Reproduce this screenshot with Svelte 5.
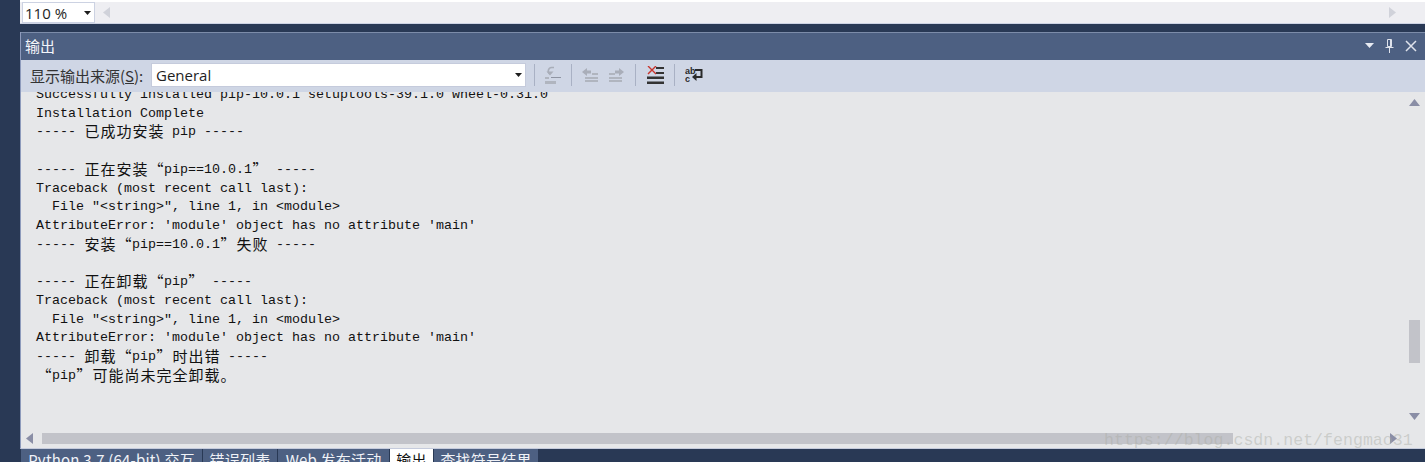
<script>
  const cjk = (s) => ({ c: s });
  const lines = [
    ['Successfully installed pip-10.0.1 setuptools-39.1.0 wheel-0.31.0'],
    ['Installation Complete'],
    ['----- ', cjk('已成功安装'), ' pip -----'],
    [],
    ['----- ', cjk('正在安装“'), 'pip==10.0.1', cjk('”'), ' -----'],
    ['Traceback (most recent call last):'],
    ['  File "<string>", line 1, in <module>'],
    ["AttributeError: 'module' object has no attribute 'main'"],
    ['----- ', cjk('安装“'), 'pip==10.0.1', cjk('”失败'), ' -----'],
    [],
    ['----- ', cjk('正在卸载“'), 'pip', cjk('”'), ' -----'],
    ['Traceback (most recent call last):'],
    ['  File "<string>", line 1, in <module>'],
    ["AttributeError: 'module' object has no attribute 'main'"],
    ['----- ', cjk('卸载“'), 'pip', cjk('”时出错'), ' -----'],
    [cjk('“'), 'pip', cjk('”可能尚未完全卸载。')]
  ];
  const tabs = [
    { name: 'Python 3.7 (64-bit) 交互', width: 181 },
    { name: '错误列表', width: 74 },
    { name: 'Web 发布活动', width: 111 },
    { name: '输出', width: 43 },
    { name: '查找符号结果', width: 104 }
  ];
</script>

<div class="page">
  <div class="topbar">
    <div class="zoom-row">
      <div class="zoom-box">
        <span>110 %</span>
        <svg width="7" height="4" viewBox="0 0 7 4"><path d="M0 0h7L3.500 4z" fill="#1e1e1e" /></svg>
      </div>
      <svg class="arrow-l" width="7" height="11" viewBox="0 0 7 11"><path d="M7 0v11L0 5.500z" fill="#d0d2da" /></svg>
      <span class="spacer"></span>
      <svg class="arrow-r" width="7" height="11" viewBox="0 0 7 11"><path d="M0 0v11l7-5.500z" fill="#d0d2da" /></svg>
    </div>
  </div>

  <div class="panel">
    <div class="title">
      <span class="title-text">输出</span>
      <span class="spacer"></span>
      <svg width="9" height="5" viewBox="0 0 9 5"><path d="M0 0h9L4.500 5z" fill="#e8ebf2" /></svg>
      <svg class="pin" width="9" height="14" viewBox="0 0 9 14"><path d="M2.500 .5h4v7h-4zM.5 8.500h8M4.500 9v5M5.500 1v6" fill="none" stroke="#dfe3ec" /></svg>
      <svg class="close" width="12" height="12" viewBox="0 0 12 12"><path d="M1 1l10 10M11 1L1 11" stroke="#dfe3ec" stroke-width="1.500" /></svg>
    </div>

    <div class="toolbar">
      <span class="label">显示输出来源(<u>S</u>):</span>
      <div class="combo">
        <span>General</span>
        <svg width="7" height="4" viewBox="0 0 7 4"><path d="M0 0h7L3.500 4z" fill="#1e1e1e" /></svg>
      </div>
      <div class="tools">
        <i class="sep"></i>
        <svg width="16" height="18" viewBox="0 0 16 18">
          <path d="M9 1.500H6.500a3.500 3.500 0 0 0-1.500 6.500" fill="none" stroke="#a9aeb9" stroke-width="1.600" />
          <path d="M1.500 5.500l3.500 4 3.500-4z" fill="#a9aeb9" />
          <path d="M6 11h10v1H6z" fill="#8e94a2" />
          <path d="M0 11h4v2H0zM0 15h11v3H0z" fill="#b0b5bf" />
        </svg>
        <i class="sep"></i>
        <svg width="16" height="14" viewBox="0 0 16 14">
          <path d="M5 0L0 4l5 4V5.500h4v-3H5z" fill="#a9aeb9" />
          <path d="M3 9h13v2H3zM3 12h13v2H3zM10 5h6v2h-6z" fill="#b0b5bf" />
        </svg>
        <svg width="17" height="14" viewBox="0 0 17 14">
          <path d="M11 0l5 4-5 4V5.500H7v-3h4z" fill="#a9aeb9" />
          <path d="M1 9h13v2H1zM1 12h13v2H1zM1 5h6v2H1z" fill="#b0b5bf" />
        </svg>
        <i class="sep"></i>
        <svg class="clear" width="17" height="18" viewBox="0 0 17 18">
          <path d="M9 1h8v2H9zM9 6h8v2H9zM0 10.500h17v2.500H0zM0 15.500h17v2.500H0z" fill="#333" />
          <path d="M1 0l8 8M9 0L1 8" stroke="#c8342c" stroke-width="1.400" />
        </svg>
        <i class="sep"></i>
        <svg width="18" height="16" viewBox="0 0 18 16">
          <text x="0" y="7" class="abc">ab</text>
          <text x="0" y="15" class="abc">c</text>
          <path d="M10 3h6.500v7H10" fill="none" stroke="#2a2a2a" stroke-width="2" />
          <path d="M7 10l4.500-4v8z" fill="#2a2a2a" />
        </svg>
      </div>
    </div>

    <div class="body">
      <div class="viewport">
        <div class="output">
          {#each lines as line}
            <div class="line">
              {#each line as part}
                {#if typeof part === 'string'}{part}{:else}{#each part.c as ch}<span class="cjk">{ch}</span>{/each}{/if}
              {/each}
            </div>
          {/each}
        </div>
      </div>
      <div class="vbar">
        <svg width="11" height="7" viewBox="0 0 11 7"><path d="M0 7h11L5.500 0z" fill="#8a8ea6" /></svg>
        <div class="vtrack"><div class="vthumb"></div></div>
        <svg width="11" height="7" viewBox="0 0 11 7"><path d="M0 0h11L5.500 7z" fill="#8a8ea6" /></svg>
      </div>
    </div>

    <div class="hbar">
      <svg width="7" height="11" viewBox="0 0 7 11"><path d="M7 0v11L0 5.500z" fill="#8a8ea6" /></svg>
      <div class="htrack"><div class="hthumb"></div></div>
      <svg width="7" height="11" viewBox="0 0 7 11"><path d="M0 0v11l7-5.500z" fill="#8a8ea6" /></svg>
    </div>
  </div>

  <div class="tabs">
    {#each tabs as tab, i}
      <div class="tab" class:active={i === 3} style="width: {tab.width}px">{tab.name}</div>
    {/each}
  </div>

  <div class="watermark">https://blog.csdn.net/fengmao31</div>
</div>

<style>
  :global(body) {
    margin: 0;
    background: #293955;
  }

  .page {
    position: relative;
    width: 1425px;
    height: 462px;
    overflow: hidden;
    padding-left: 20px;
    box-sizing: border-box;
    background: #293955;
    font-family: "Noto Sans CJK SC", "Noto Sans", sans-serif;
  }

  .spacer {
    flex: 1;
  }

  .topbar {
    height: 24px;
    box-sizing: border-box;
    background: linear-gradient(#fff 2px, #eeeef2 2px);
    border-bottom: 1px solid #cdd3e4;
  }

  .zoom-row {
    display: flex;
    align-items: center;
    height: 23px;
    padding: 2px 29px 0 2px;
    box-sizing: border-box;
  }

  .zoom-box {
    display: flex;
    align-items: center;
    justify-content: space-between;
    width: 73px;
    height: 21px;
    box-sizing: border-box;
    padding: 0 3px 0 2px;
    background: #fff;
    border: 1px solid #ccd2e2;
    font: 15px "Open Sans", "Noto Sans", sans-serif;
    color: #1e1e1e;
  }

  .arrow-l {
    margin-left: 8px;
  }

  .panel {
    margin-top: 8px;
    height: 417px;
    display: flex;
    flex-direction: column;
    background: #e6e7e9;
    border-left: 1px solid #8e9bbc;
    border-bottom: 1px solid #c5cbdc;
    box-sizing: border-box;
  }

  .title {
    display: flex;
    align-items: center;
    height: 28px;
    flex: none;
    box-sizing: border-box;
    padding: 0 8px 2px 4px;
    background: #4d6082;
    border-top: 1px solid #7c8ca9;
    color: #f4f6fa;
    font-size: 15px;
  }

  .pin {
    margin-left: 11px;
  }

  .close {
    margin-left: 11px;
  }

  .toolbar {
    display: flex;
    align-items: center;
    height: 32px;
    flex: none;
    box-sizing: border-box;
    padding: 0 0 2px 9px;
    background: #cfd6e5;
  }

  .label {
    font-size: 15px;
    color: #333;
    width: 121px;
    white-space: nowrap;
  }

  .combo {
    display: flex;
    align-items: center;
    justify-content: space-between;
    width: 375px;
    height: 24px;
    box-sizing: border-box;
    padding: 0 3px 0 4px;
    background: #fff;
    border: 1px solid #c5cbdc;
    font: 15px "Open Sans", "Noto Sans", sans-serif;
    color: #1e1e1e;
  }

  .tools {
    display: flex;
    align-items: center;
    gap: 10px;
    margin-left: 8px;
  }

  .sep {
    width: 1px;
    height: 22px;
    background: #a9b1c4;
  }

  .clear {
    margin-left: 1px;
  }

  .abc {
    font: bold 9px "Liberation Sans", sans-serif;
    fill: #2a2a2a;
  }

  .body {
    flex: 1;
    display: flex;
    min-height: 0;
  }

  .viewport {
    flex: 1;
    overflow: hidden;
  }

  .output {
    margin-top: -6px;
    padding-left: 15px;
    font-family: "Liberation Mono", "Noto Sans CJK SC", monospace;
    font-size: 13.33px;
    line-height: 18.72px;
    color: #111;
  }

  .line {
    height: 18.72px;
    white-space: pre;
  }

  .cjk {
    display: inline-block;
    width: 16px;
    font-family: "Noto Sans CJK SC", sans-serif;
    font-size: 15px;
    line-height: 16px;
    text-align: center;
    vertical-align: top;
  }

  .vbar {
    width: 17px;
    box-sizing: border-box;
    padding: 7px 5px 12px 1px;
    display: flex;
    flex-direction: column;
    align-items: center;
  }

  .vtrack {
    flex: 1;
    width: 11px;
    padding-top: 214px;
    box-sizing: border-box;
  }

  .vthumb {
    height: 43px;
    background: #c2c3c9;
  }

  .hbar {
    display: flex;
    align-items: center;
    height: 16px;
    flex: none;
    box-sizing: border-box;
    padding: 0 28px 4px 5px;
  }

  .htrack {
    flex: 1;
    margin: 0 157px 0 9px;
  }

  .hthumb {
    height: 11px;
    background: #c2c3c9;
  }

  .tabs {
    display: flex;
    height: 13px;
    overflow: hidden;
    padding-left: 1px;
    font-size: 15px;
    letter-spacing: 0.2px;
  }

  .tab {
    flex: none;
    height: 22px;
    line-height: 22px;
    box-sizing: border-box;
    text-align: center;
    background: #4d6082;
    color: #f0f2f7;
    margin-right: 1px;
    white-space: nowrap;
  }

  .tab.active {
    background: #fff;
    color: #111;
  }

  .watermark {
    position: absolute;
    left: 1104px;
    top: 431px;
    font: 16.6px/20px "Liberation Mono", monospace;
    color: rgba(170, 172, 165, 0.45);
    white-space: nowrap;
    pointer-events: none;
  }
</style>
